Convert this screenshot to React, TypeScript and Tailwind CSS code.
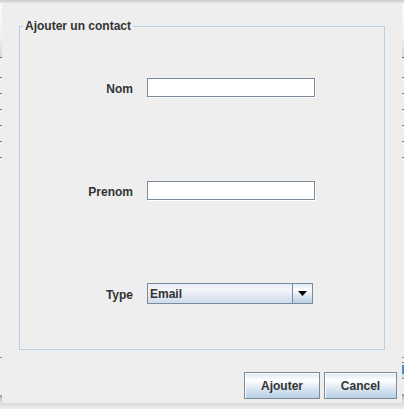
const Edge = ({ right = false }: { right?: boolean }) => (
  <div className="w-[2px] flex flex-col">
    <div className="h-[54px] bg-[linear-gradient(to_bottom,#fbfbfb,#f2f2f2_60%,#d8d8d8)]" />
    <div className="h-px bg-[#6e6e6e]" />
    <div className="h-[19px]" />
    <div className="h-px bg-[#7c7c7c]" />
    <div className="h-[15px]" />
    <div className="h-px bg-[#7c7c7c]" />
    <div className="h-[15px]" />
    <div className="h-px bg-[#7c7c7c]" />
    <div className="h-[15px]" />
    <div className="h-px bg-[#7c7c7c]" />
    <div className="h-[15px]" />
    <div className="h-px bg-[#7c7c7c]" />
    <div className="h-[15px]" />
    <div className="h-px bg-[#7c7c7c]" />
    <div className="h-[199px]" />
    <div className="h-px bg-[#8a8a8a]" />
    {right ? (
      <>
        <div className="h-[4px]" />
        <div className="h-px bg-[#7a8a99]" />
        <div className="h-[2px] bg-[#e4ecf4]" />
        <div className="h-[9px] bg-[#4d8cc6]" />
        <div className="h-[4px] bg-[#c9d9e9]" />
        <div className="h-px bg-[#7a8a99]" />
        <div className="h-[15px]" />
      </>
    ) : (
      <div className="h-[37px]" />
    )}
    <div className="flex-1 bg-[linear-gradient(to_bottom,#8e8e8e,#c8c8c8_40%,#e2e2e2)]" />
  </div>
);

const Label = ({ text }: { text: string }) => (
  <div className="w-[113px] pt-[2px] text-right text-[12px] leading-[14px] font-bold text-[#333333]">
    {text}
  </div>
);

const TextField = () => (
  <div className="ml-[14px] w-[168px] h-[19px] border border-[#7a8a99] bg-white shadow-[1px_1px_0_#ffffff]" />
);

const oceanGradient =
  'bg-[linear-gradient(to_bottom,#dde8f3_0%,#ffffff_30%,#dde8f3_60%,#b8cfe5_100%)]';

const App = () => {
  return (
    <div className="w-[404px] h-[409px] flex flex-col bg-[#eeeeee] overflow-hidden font-['Liberation_Sans',Arial,sans-serif]">
      <div className="h-[3px] bg-[linear-gradient(to_bottom,#cdcdcd,#e3e3e3)]" />
      <div className="flex h-[400px]">
        <Edge />
        <div className="w-[400px] flex flex-col pt-[16px]">
          <fieldset className="mx-[17px] h-[331px] border border-[#b8cfe5]">
            <legend className="ml-[3px] px-[2px] text-[12px] leading-[14px] font-bold text-[#333333]">
              Ajouter un contact
            </legend>
            <div className="flex flex-col pt-[3px]">
              <div className="h-[103px] flex items-center">
                <Label text="Nom" />
                <TextField />
              </div>
              <div className="h-[103px] flex items-center">
                <Label text="Prenom" />
                <TextField />
              </div>
              <div className="h-[103px] flex items-center">
                <Label text="Type" />
                <div className="ml-[14px] w-[166px] h-[21px] border border-[#7a8a99] flex bg-[linear-gradient(to_bottom,#e6edf5_0%,#f4f7fa_30%,#e2eaf3_60%,#cddcec_100%)]">
                  <div className="flex-1 flex items-center pl-[2px] text-[12px] leading-[14px] font-bold text-[#333333]">
                    Email
                  </div>
                  <div className={`w-[20px] border-l border-[#7a8a99] flex items-center justify-center ${oceanGradient}`}>
                    <svg width="9" height="5" viewBox="0 0 9 5">
                      <polygon points="0,0 9,0 4.5,5" fill="#000000" />
                    </svg>
                  </div>
                </div>
              </div>
            </div>
          </fieldset>
          <div className="mt-[22px] flex justify-end gap-[4px] pr-[5px]">
            <button
              className={`w-[76px] h-[27px] border border-[#7a8a99] shadow-[inset_1px_1px_0_#ffffff] text-[12px] font-bold text-[#333333] ${oceanGradient}`}
            >
              Ajouter
            </button>
            <button
              className={`w-[73px] h-[27px] border border-[#7a8a99] shadow-[inset_1px_1px_0_#ffffff] text-[12px] font-bold text-[#333333] ${oceanGradient}`}
            >
              Cancel
            </button>
          </div>
        </div>
        <Edge right />
      </div>
      <div className="h-[6px] bg-[linear-gradient(to_bottom,#d9d9d9,#f0f0f0)]" />
    </div>
  );
};

export default App;
